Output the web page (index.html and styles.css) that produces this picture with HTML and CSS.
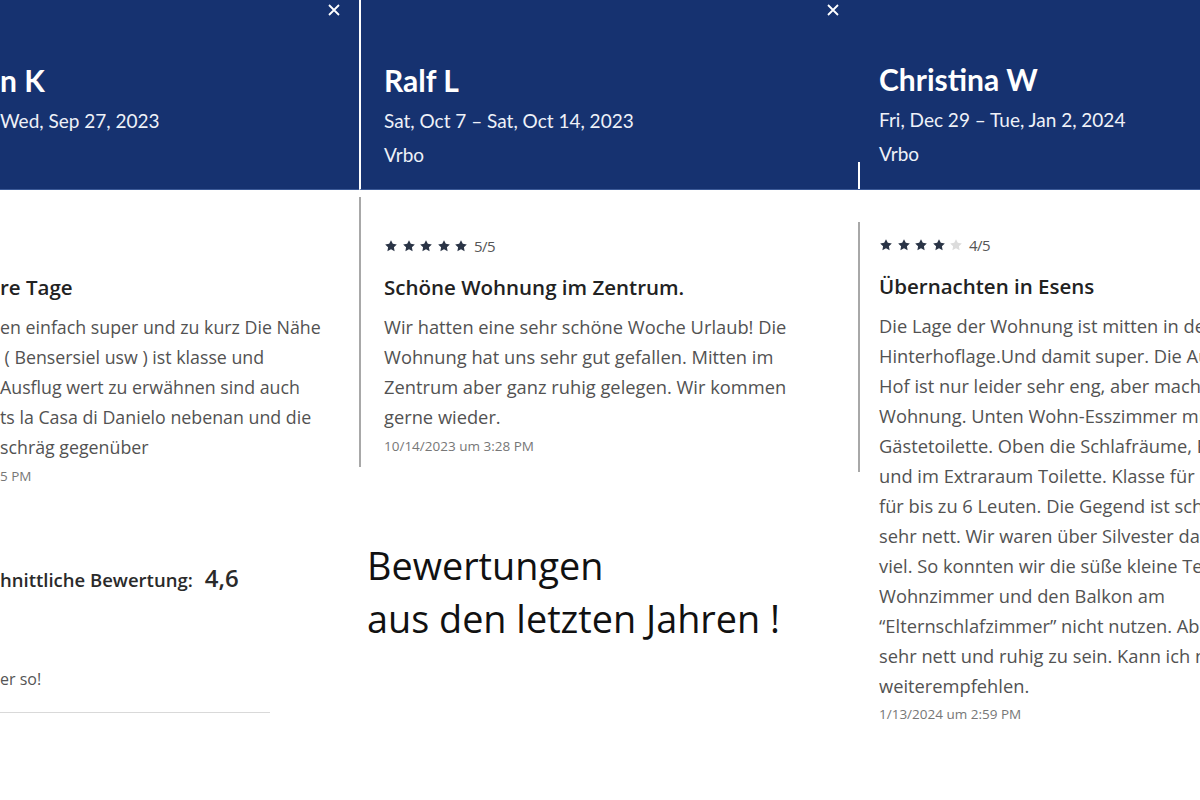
FILE: index.html
```html
<!DOCTYPE html>
<html lang="de">
<head>
    <meta charset="UTF-8">
    <meta name="viewport" content="width=device-width, initial-scale=1.0">
    <title>Bewertungen</title>
    <link rel="stylesheet" href="styles.css">
</head>
<body>
    <div class="strip">

        <!-- linker Ausschnitt, am Rand abgeschnitten -->
        <div class="shot first">
            <div class="head">
                <h2 class="name">n K</h2>
                <div class="dates">Wed, Sep 27, 2023</div>
                <button class="close" aria-label="Schließen">
                    <svg width="12" height="12" viewBox="0 0 12 12"><path d="M1 1L11 11M11 1L1 11" stroke="#fff" stroke-width="1.8"/></svg>
                </button>
            </div>
            <div class="body">
                <h3 class="title">re Tage</h3>
                <p class="text">en einfach super und zu kurz Die Nähe<br>&nbsp;( Bensersiel usw ) ist klasse und<br>Ausflug wert zu erwähnen sind auch<br>ts la Casa di Danielo nebenan und die<br>schräg gegenüber</p>
                <div class="stamp">5 PM</div>
                <div class="average">
                    <span class="label">hnittliche Bewertung:</span>
                    <span class="score">4,6</span>
                </div>
                <p class="note">er so!</p>
                <div class="rule"></div>
            </div>
        </div>

        <div class="shot second">
            <div class="head">
                <h2 class="name">Ralf L</h2>
                <div class="dates">Sat, Oct 7 – Sat, Oct 14, 2023</div>
                <div class="source">Vrbo</div>
                <button class="close" aria-label="Schließen">
                    <svg width="12" height="12" viewBox="0 0 12 12"><path d="M1 1L11 11M11 1L1 11" stroke="#fff" stroke-width="1.8"/></svg>
                </button>
            </div>
            <div class="body">
                <div class="review">
                    <div class="rating">
                        <span class="stars">
                            <svg width="14" height="14" viewBox="0 0 24 24"><path class="on" d="M12 2l3.09 6.26L22 9.27l-5 4.87 1.18 6.88L12 17.77l-6.18 3.25L7 14.14 2 9.27l6.91-1.01z"/></svg>
                            <svg width="14" height="14" viewBox="0 0 24 24"><path class="on" d="M12 2l3.09 6.26L22 9.27l-5 4.87 1.18 6.88L12 17.77l-6.18 3.25L7 14.14 2 9.27l6.91-1.01z"/></svg>
                            <svg width="14" height="14" viewBox="0 0 24 24"><path class="on" d="M12 2l3.09 6.26L22 9.27l-5 4.87 1.18 6.88L12 17.77l-6.18 3.25L7 14.14 2 9.27l6.91-1.01z"/></svg>
                            <svg width="14" height="14" viewBox="0 0 24 24"><path class="on" d="M12 2l3.09 6.26L22 9.27l-5 4.87 1.18 6.88L12 17.77l-6.18 3.25L7 14.14 2 9.27l6.91-1.01z"/></svg>
                            <svg width="14" height="14" viewBox="0 0 24 24"><path class="on" d="M12 2l3.09 6.26L22 9.27l-5 4.87 1.18 6.88L12 17.77l-6.18 3.25L7 14.14 2 9.27l6.91-1.01z"/></svg>
                        </span>
                        <span class="count">5/5</span>
                    </div>
                    <h3 class="title">Schöne Wohnung im Zentrum.</h3>
                    <p class="text">Wir hatten eine sehr schöne Woche Urlaub! Die<br>Wohnung hat uns sehr gut gefallen. Mitten im<br>Zentrum aber ganz ruhig gelegen. Wir kommen<br>gerne wieder.</p>
                    <div class="stamp">10/14/2023 um 3:28 PM</div>
                </div>
                <p class="caption">Bewertungen<br>aus den letzten Jahren !</p>
            </div>
        </div>

        <div class="shot third">
            <div class="head">
                <h2 class="name">Christina W</h2>
                <div class="dates">Fri, Dec 29 – Tue, Jan 2, 2024</div>
                <div class="source">Vrbo</div>
            </div>
            <div class="body">
                <div class="review">
                    <div class="rating">
                        <span class="stars">
                            <svg width="14" height="14" viewBox="0 0 24 24"><path class="on" d="M12 2l3.09 6.26L22 9.27l-5 4.87 1.18 6.88L12 17.77l-6.18 3.25L7 14.14 2 9.27l6.91-1.01z"/></svg>
                            <svg width="14" height="14" viewBox="0 0 24 24"><path class="on" d="M12 2l3.09 6.26L22 9.27l-5 4.87 1.18 6.88L12 17.77l-6.18 3.25L7 14.14 2 9.27l6.91-1.01z"/></svg>
                            <svg width="14" height="14" viewBox="0 0 24 24"><path class="on" d="M12 2l3.09 6.26L22 9.27l-5 4.87 1.18 6.88L12 17.77l-6.18 3.25L7 14.14 2 9.27l6.91-1.01z"/></svg>
                            <svg width="14" height="14" viewBox="0 0 24 24"><path class="on" d="M12 2l3.09 6.26L22 9.27l-5 4.87 1.18 6.88L12 17.77l-6.18 3.25L7 14.14 2 9.27l6.91-1.01z"/></svg>
                            <svg width="14" height="14" viewBox="0 0 24 24"><path class="off" d="M12 2l3.09 6.26L22 9.27l-5 4.87 1.18 6.88L12 17.77l-6.18 3.25L7 14.14 2 9.27l6.91-1.01z"/></svg>
                        </span>
                        <span class="count">4/5</span>
                    </div>
                    <h3 class="title">Übernachten in Esens</h3>
                    <p class="text">Die Lage der Wohnung ist mitten in der Stadt in<br>Hinterhoflage.Und damit super. Die Ausfahrt vom<br>Hof ist nur leider sehr eng, aber machbar. Schöne<br>Wohnung. Unten Wohn-Esszimmer mit Küche und<br>Gästetoilette. Oben die Schlafräume, Bad mit Dusche<br>und im Extraraum Toilette. Klasse für eine Familie<br>für bis zu 6 Leuten. Die Gegend ist schön und alle<br>sehr nett. Wir waren über Silvester da. Es regnete<br>viel. So konnten wir die süße kleine Terrasse am<br>Wohnzimmer und den Balkon am<br>“Elternschlafzimmer” nicht nutzen. Aber alle waren<br>sehr nett und ruhig zu sein. Kann ich nur<br>weiterempfehlen.</p>
                    <div class="stamp">1/13/2024 um 2:59 PM</div>
                </div>
            </div>
        </div>

    </div>
</body>
</html>
```

FILE: styles.css
```css
*{
    margin: 0;
    padding: 0;
    box-sizing: border-box;
}

body{
    background: #fff;
    font-family: "Open Sans", Lato, sans-serif;
}

.strip{
    display: flex;
    width: 1200px;
    height: 800px;
    overflow: hidden;
}

.shot{
    display: flex;
    flex-direction: column;
    flex: none;
}

.shot.first{
    width: 359px;
}

.shot.second{
    width: 499px;
}

.shot.third{
    flex: 1;
    min-width: 0;
}

/* blauer Kopf */
.head{
    position: relative;
    height: 190px;
    padding: 62px 0 0 23px;
    background: #163270;
    border-bottom: 1px solid #3c5a97;
    color: #fff;
    font-family: Lato, sans-serif;
}

.first .head{
    padding-left: 0;
}

.second .head{
    border-left: 2px solid #fff;
    padding-left: 23px;
}

.third .head{
    padding-left: 21px;
    padding-top: 61px;
}

.third .head::before{
    content: "";
    position: absolute;
    left: 0;
    bottom: 0;
    width: 2px;
    height: 27px;
    background: #fff;
}

.name{
    font-size: 30px;
    font-weight: 700;
    line-height: 36px;
    margin-bottom: 6px;
}

.dates, .source{
    font-size: 19px;
    line-height: 34px;
    color: #eef1f8;
}

.close{
    position: absolute;
    top: 4px;
    right: 19px;
    border: none;
    background: none;
    line-height: 0;
}

/* weisser Inhalt */
.body{
    flex: 1;
    white-space: nowrap;
}

.first .body{
    padding-top: 83px;
}

.review{
    position: relative;
}

.second .review{
    margin-top: 7px;
    padding: 39px 0 11px 23px;
    border-left: 2px solid #a8a8a8;
}

.third .review{
    margin-top: 32px;
    padding: 13px 0 0 21px;
}

.third .review::before{
    content: "";
    position: absolute;
    left: 0;
    top: 0;
    width: 2px;
    height: 250px;
    background: #a8a8a8;
}

.rating{
    display: flex;
    align-items: center;
    height: 20px;
}

.stars{
    display: flex;
    gap: 3.5px;
}

.stars .on{
    fill: #2a3446;
}

.stars .off{
    fill: #dcdcdc;
}

.count{
    margin-left: 6px;
    font-size: 15px;
    color: #555;
    letter-spacing: -0.5px;
}

.title{
    margin-top: 17px;
    font-size: 20.5px;
    font-weight: 600;
    line-height: 28px;
    color: #222;
}

.first .title{
    margin-top: 0;
}

.text{
    margin-top: 11px;
    font-size: 18.3px;
    line-height: 30px;
    color: #525252;
}

.first .text{
    font-size: 17.8px;
}

.stamp{
    margin-top: 4px;
    font-size: 13.5px;
    line-height: 20px;
    color: #777;
}

.third .stamp{
    margin-top: 3px;
}

.average{
    display: flex;
    align-items: baseline;
    gap: 12px;
    margin-top: 75px;
    line-height: 34px;
    color: #2a2a2a;
}

.average .label{
    font-size: 18.5px;
    font-weight: 600;
}

.average .score{
    font-size: 24px;
    font-weight: 600;
}

.note{
    margin-top: 71px;
    font-size: 16px;
    line-height: 22px;
    color: #555;
}

.rule{
    width: 270px;
    margin-top: 22px;
    border-top: 1px solid #d9d9d9;
}

.caption{
    margin: 72px 0 0 8px;
    font-size: 37.8px;
    line-height: 53px;
    color: #111;
}
```
